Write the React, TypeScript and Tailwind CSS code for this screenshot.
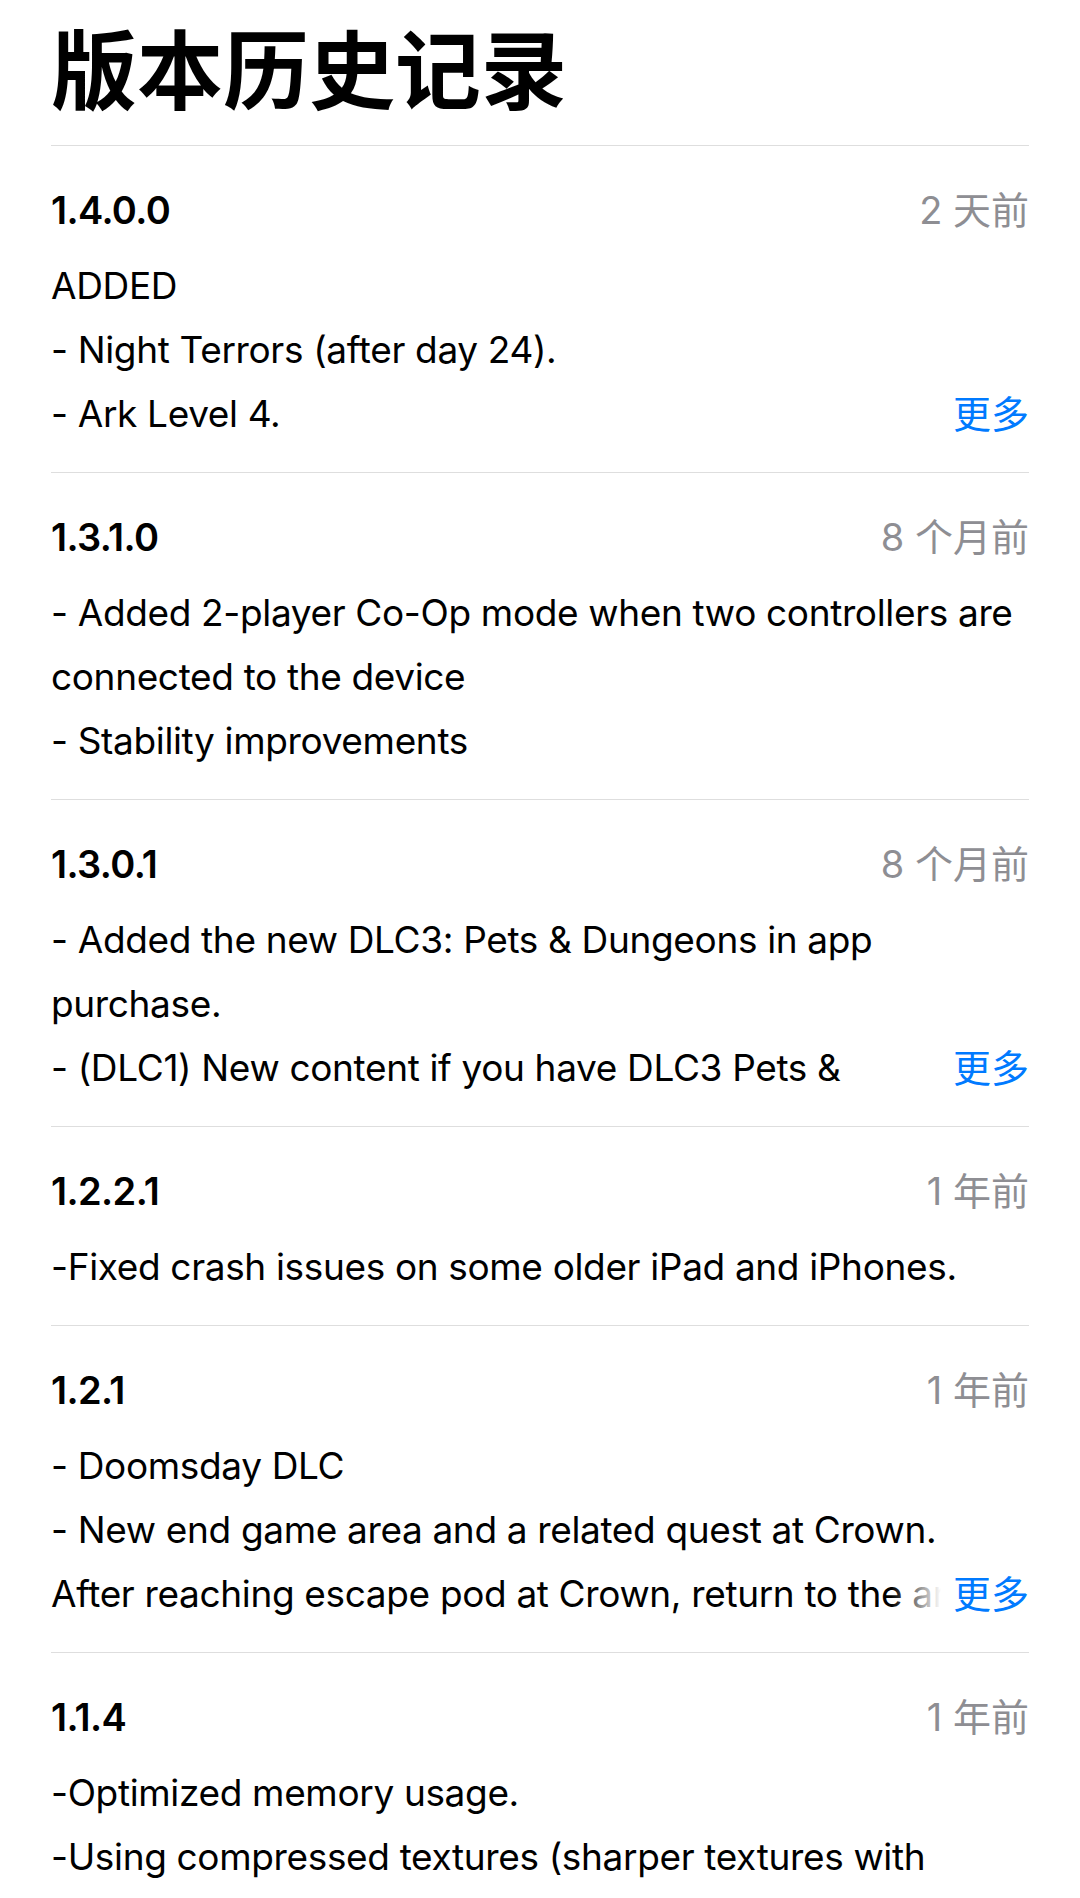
type Release = {
  version: string
  date: string
  lines: string[]
  more?: boolean
}

const releases: Release[] = [
  {
    version: '1.4.0.0',
    date: '2 天前',
    lines: ['ADDED', '- Night Terrors (after day 24).', '- Ark Level 4.'],
    more: true,
  },
  {
    version: '1.3.1.0',
    date: '8 个月前',
    lines: [
      '- Added 2-player Co-Op mode when two controllers are',
      'connected to the device',
      '- Stability improvements',
    ],
  },
  {
    version: '1.3.0.1',
    date: '8 个月前',
    lines: [
      '- Added the new DLC3: Pets & Dungeons in app',
      'purchase.',
      '- (DLC1) New content if you have DLC3 Pets &',
    ],
    more: true,
  },
  {
    version: '1.2.2.1',
    date: '1 年前',
    lines: ['-Fixed crash issues on some older iPad and iPhones.'],
  },
  {
    version: '1.2.1',
    date: '1 年前',
    lines: [
      '- Doomsday DLC',
      '- New end game area and a related quest at Crown.',
      'After reaching escape pod at Crown, return to the area',
    ],
    more: true,
  },
  {
    version: '1.1.4',
    date: '1 年前',
    lines: [
      '-Optimized memory usage.',
      '-Using compressed textures (sharper textures with',
      'lower memory usage).',
    ],
  },
]

function ReleaseItem({ r }: { r: Release }) {
  return (
    <section className="border-t border-[#dedede] pt-[40px] pb-[26px]">
      <div className="flex items-center justify-between h-[48px]">
        <span className="text-[38px] font-semibold tracking-[-0.6px] text-black">{r.version}</span>
        <span className="text-[38px] text-[#8e8e93]">{r.date}</span>
      </div>
      <div className="relative mt-[20px] text-[37px] tracking-[-0.35px] leading-[64px] text-black">
        {r.lines.map((l, i) => (
          <div key={i} className="whitespace-nowrap overflow-hidden">{l}</div>
        ))}
        {r.more ? (
          <div className="absolute right-0 bottom-0 h-[64px] flex">
            <div className="w-[50px] bg-gradient-to-r from-white/0 to-white" />
            <button className="bg-white pl-[12px] text-[#007aff] text-[38px] tracking-normal leading-[64px]">更多</button>
          </div>
        ) : null}
      </div>
    </section>
  )
}

export default function App() {
  return (
    <div className="min-h-screen bg-white px-[51px] font-['Inter','Noto_Sans_CJK_SC',sans-serif] antialiased">
      <h1 className="pt-[30px] pb-[30px] text-[86px] leading-[85px] font-bold text-black">版本历史记录</h1>
      {releases.map(r => (
        <ReleaseItem key={r.version} r={r} />
      ))}
    </div>
  )
}
